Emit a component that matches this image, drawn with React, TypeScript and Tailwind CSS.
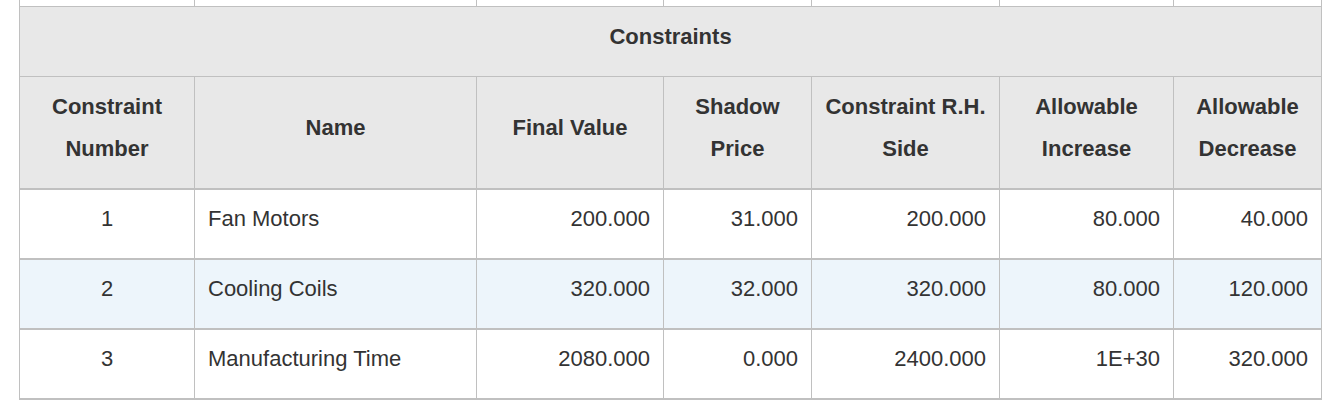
import React from 'react';

type Row = {
  num: number;
  name: string;
  finalValue: string;
  shadowPrice: string;
  rhs: string;
  increase: string;
  decrease: string;
};

const rows: Row[] = [
  { num: 1, name: 'Fan Motors', finalValue: '200.000', shadowPrice: '31.000', rhs: '200.000', increase: '80.000', decrease: '40.000' },
  { num: 2, name: 'Cooling Coils', finalValue: '320.000', shadowPrice: '32.000', rhs: '320.000', increase: '80.000', decrease: '120.000' },
  { num: 3, name: 'Manufacturing Time', finalValue: '2080.000', shadowPrice: '0.000', rhs: '2400.000', increase: '1E+30', decrease: '320.000' },
];

const widths = ['w-[176px]', 'w-[282px]', 'w-[187px]', 'w-[148px]', 'w-[188px]', 'w-[174px]', 'w-[148px]'];

const headers: React.ReactNode[] = [
  <>Constraint<br />Number</>,
  <>Name</>,
  <>Final Value</>,
  <>Shadow<br />Price</>,
  <>Constraint R.H.<br />Side</>,
  <>Allowable<br />Increase</>,
  <>Allowable<br />Decrease</>,
];

const App: React.FC = () => {
  const th = 'border-r border-b-2 border-[#c0c0c0] bg-[#e8e8e8] px-[13px] pt-[9px] pb-[18px] text-center align-middle font-bold whitespace-nowrap';
  const td = 'border-r border-b-2 border-[#c0c0c0] pt-[8px] pb-[18px] px-[13px] align-middle';

  return (
    <div className="min-h-[417px] bg-white pl-[19px] font-['Liberation_Sans',Arial,sans-serif] text-[22px] leading-[42px] text-[#333333]">
      <table className="w-[1303px] table-fixed border-separate border-spacing-0">
        <colgroup>
          {widths.map((w, i) => (
            <col key={i} className={w} />
          ))}
        </colgroup>
        <tbody>
          {/* tail of the row above */}
          <tr>
            {widths.map((_, i) => (
              <td key={i} className={`h-[6px] p-0 border-r border-[#c0c0c0] bg-white ${i === 0 ? 'border-l' : ''}`} />
            ))}
          </tr>

          <tr>
            <th
              colSpan={7}
              className="border border-[#c0c0c0] bg-[#e8e8e8] pt-[9px] pb-[18px] text-center font-bold"
            >
              Constraints
            </th>
          </tr>

          <tr>
            {headers.map((h, i) => (
              <th key={i} className={`${th} ${i === 0 ? 'border-l' : ''}`}>
                {h}
              </th>
            ))}
          </tr>

          {rows.map((r, idx) => {
            const bg = idx === 1 ? 'bg-[#edf5fb]' : 'bg-white';
            return (
              <tr key={r.num} className={bg}>
                <td className={`${td} border-l text-center`}>{r.num}</td>
                <td className={`${td} text-left`}>{r.name}</td>
                <td className={`${td} text-right`}>{r.finalValue}</td>
                <td className={`${td} text-right`}>{r.shadowPrice}</td>
                <td className={`${td} text-right`}>{r.rhs}</td>
                <td className={`${td} text-right`}>{r.increase}</td>
                <td className={`${td} text-right`}>{r.decrease}</td>
              </tr>
            );
          })}
        </tbody>
      </table>
    </div>
  );
};

export default App;
